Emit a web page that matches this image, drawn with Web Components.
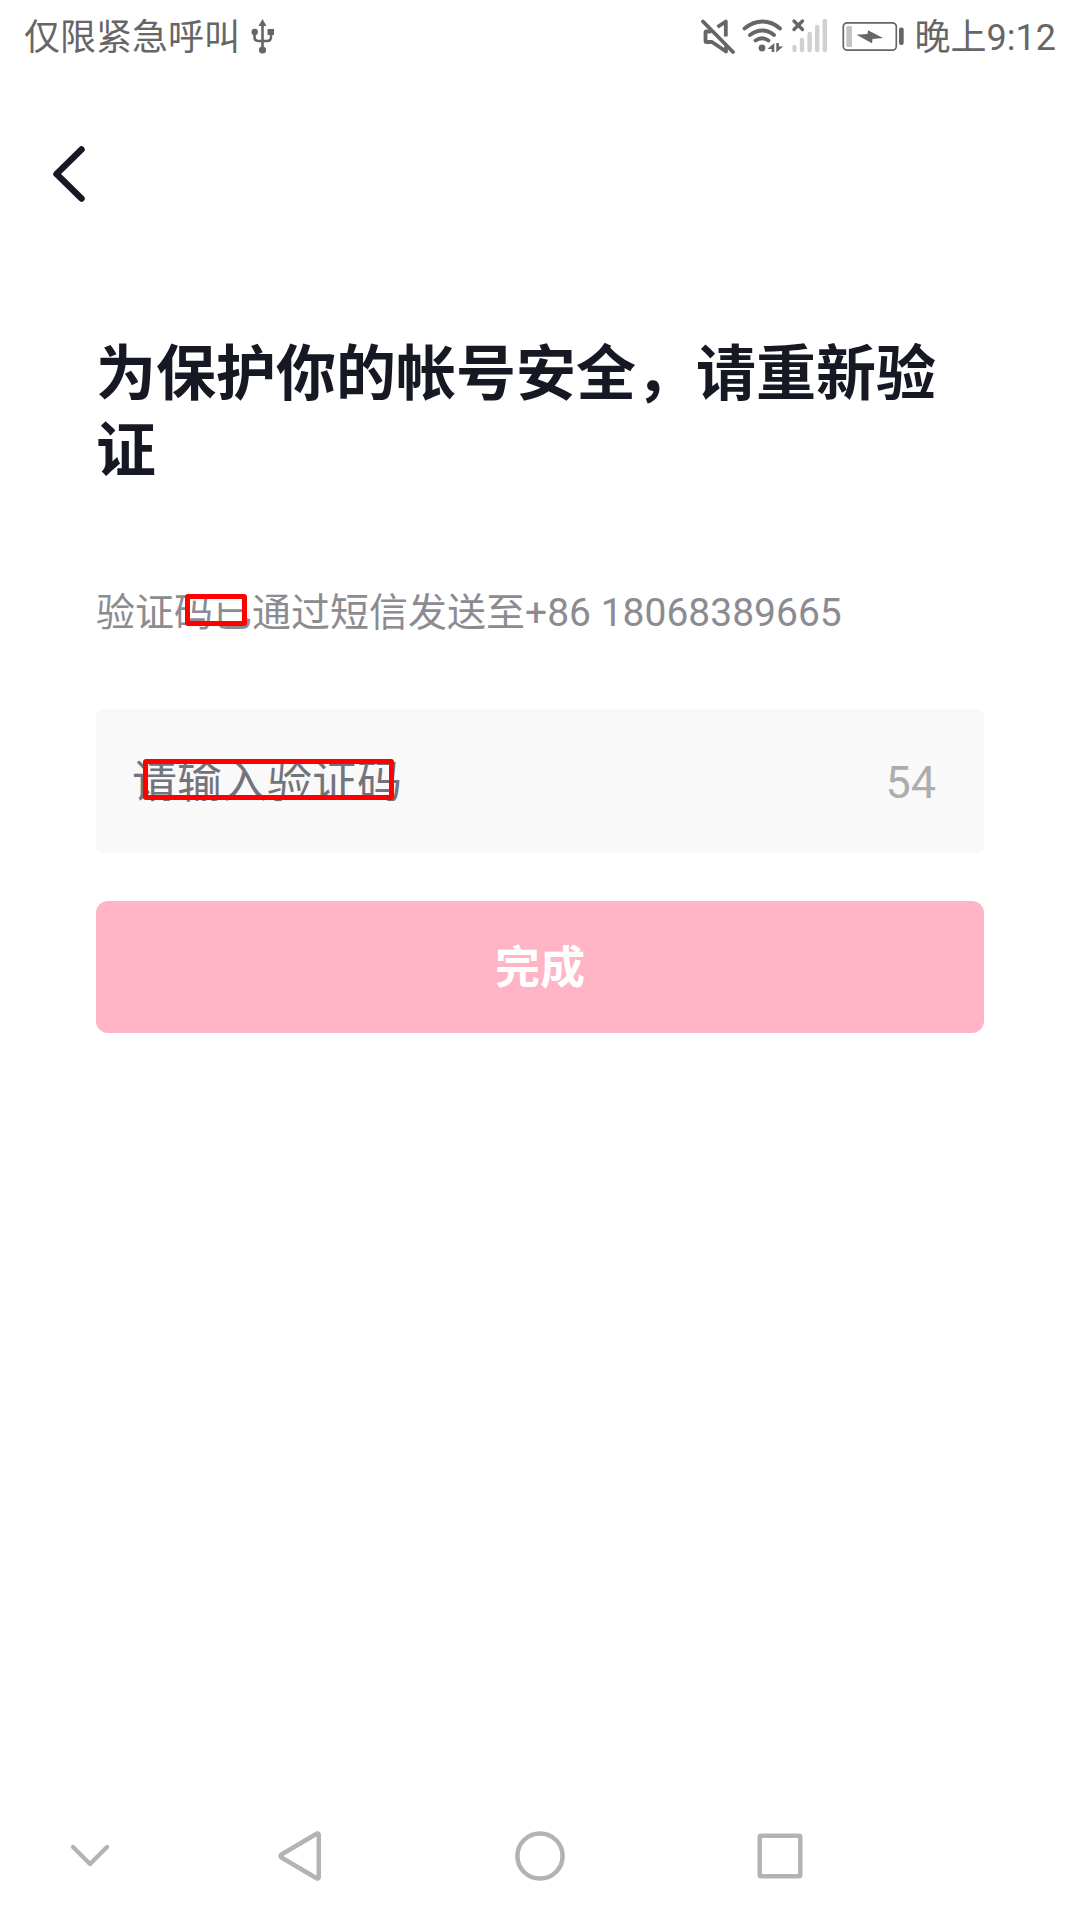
<!DOCTYPE html>
<html lang="zh-CN">
<head>
<meta charset="utf-8">
<meta name="viewport" content="width=device-width, initial-scale=1">
<title>验证</title>
<style>
  body { margin: 0; background: #fff; font-family: Roboto, "Noto Sans CJK SC", sans-serif; }
</style>
</head>
<body>
<verify-page>
  <status-bar slot="status" carrier="仅限紧急呼叫" time="晚上9:12"></status-bar>
  <page-header slot="header"></page-header>
  <page-title>为保护你的帐号安全，请重新验证</page-title>
  <sent-note>验证码已通过短信发送至+86 18068389665</sent-note>
  <code-field placeholder="请输入验证码" seconds="54"></code-field>
  <submit-button>完成</submit-button>
  <system-nav slot="nav"></system-nav>
</verify-page>

<script>
  const define = (name, render) => customElements.define(name, class extends HTMLElement {
    constructor() {
      super();
      this.attachShadow({ mode: 'open' });
    }
    connectedCallback() {
      this.shadowRoot.innerHTML = '<style>*{box-sizing:border-box}svg{display:block}</style>' + render(this);
    }
  });

  define('verify-page', () => `
    <style>
      :host { display: flex; flex-direction: column; min-height: 100vh; }
      main { display: flex; flex-direction: column; padding: 60px 96px 48px; }
      footer { margin-top: auto; }
    </style>
    <slot name="status"></slot>
    <slot name="header"></slot>
    <main><slot></slot></main>
    <footer><slot name="nav"></slot></footer>`);

  define('status-bar', el => `
    <style>
      :host { display: flex; align-items: center; justify-content: space-between; height: 72px; padding: 0 24px; color: #666; font-size: 36px; line-height: 48px; }
      div { display: flex; align-items: center; }
      span { padding-top: 4px; }
      .left, .right { gap: 10px; }
      .icons { gap: 4px; padding-right: 2px; }
    </style>
    <div class="left">
      <span>${el.getAttribute('carrier')}</span>
      <svg width="26" height="40" viewBox="250 16 26 40" fill="#666" aria-hidden="true">
        <path d="M262.500 19l4 7h-8z"/><circle cx="262.500" cy="50" r="3.600"/><circle cx="254.700" cy="32" r="3.200"/><path d="M267.500 29h6.500v6h-6.500z"/>
        <path d="M262.500 25v25M254.500 33v4q0 4 4 4h8.500q4 0 4-4v-4" fill="none" stroke="#666" stroke-width="2.600"/>
      </svg>
    </div>
    <div class="right">
      <div class="icons">
        <svg width="36" height="40" viewBox="702 16 36 40" fill="none" stroke="#666" stroke-width="3.800" stroke-linecap="round" stroke-linejoin="round" aria-hidden="true">
          <path d="M704 21.500L734 52"/><path d="M711 31.500h-3.500q-1 0-1 1v8.500q0 1 1 1h5.500l14 9.500v-4"/><path d="M718.500 27l8.300-5.500v15" stroke-linecap="butt"/>
        </svg>
        <svg width="44" height="40" viewBox="742 16 44 40" fill="none" stroke="#666" stroke-width="3.800" stroke-linecap="round" aria-hidden="true">
          <path d="M745.500 28.500Q754 21.500 763.500 21.500T781 28.500M751 35Q757 30.500 763.300 30.500T775 35M756.500 40.500Q763 36 769.500 40.500"/>
          <circle cx="763" cy="48" r="3.400" fill="#666" stroke="none"/>
          <path d="M775.300 43v9h-2.600v-3h-4.200zM777.300 43h2.600v3.500h4.200l-6.800 6z" fill="#666" stroke="none"/>
        </svg>
        <svg width="40" height="40" viewBox="790 16 40 40" fill="none" stroke-linecap="round" aria-hidden="true">
          <path d="M795.500 47v3M803 40v10M810.600 34v16M818.200 27v23M825.800 21v29" stroke="#d0d0d0" stroke-width="4.400"/>
          <path d="M795 21l8.500 8.500M803.500 21l-8.500 8.500" stroke="#666" stroke-width="3.400"/>
        </svg>
      </div>
      <svg width="64" height="40" viewBox="842 16 64 40" aria-hidden="true">
        <rect x="844.300" y="22.800" width="53" height="27.400" rx="4" fill="none" stroke="#666" stroke-width="1.700"/>
        <rect x="847.300" y="26" width="5.700" height="21" rx="1.500" fill="#c4c4c4"/>
        <rect x="900" y="27.500" width="4.700" height="17.500" rx="2" fill="#666"/>
        <path d="M857.500 34.700l11-.7.500-3.800L884 38l-10.500 1-.5 4.200z" fill="#666"/>
      </svg>
      <span>${el.getAttribute('time')}</span>
    </div>`);

  define('page-header', () => `
    <style>
      :host { display: flex; align-items: center; height: 204px; padding: 0 24px; }
      button { padding: 0; border: 0; background: none; }
    </style>
    <button type="button" aria-label="返回">
      <svg width="90" height="90" viewBox="24 129 90 90" fill="none" stroke="#161823" stroke-width="6.500" stroke-linecap="round" stroke-linejoin="round">
        <path d="M81.500 149.500L56.500 174l25 24.500"/>
      </svg>
    </button>`);

  define('page-title', () => `
    <style>
      :host { display: block; }
      h1 { margin: 0; color: #161823; font-size: 60px; line-height: 77px; font-weight: 700; }
    </style>
    <h1><slot></slot></h1>`);

  define('sent-note', () => `
    <style>
      :host { display: block; position: relative; margin-top: 96px; }
      p { margin: 0; color: #8b8b91; font-size: 39px; line-height: 54px; }
      .mark { position: absolute; left: 89px; top: 8px; width: 62px; height: 32px; border: 5px solid #f00; border-radius: 3px; }
    </style>
    <p><slot></slot></p>
    <span class="mark" aria-hidden="true"></span>`);

  define('code-field', el => `
    <style>
      :host { display: flex; align-items: center; position: relative; box-sizing: border-box; height: 144px; margin-top: 69px; padding: 4px 48px 0 36px; border-radius: 6px; background: #f9f9f9; font-size: 45px; line-height: 60px; }
      input { flex: 1; min-width: 0; height: 60px; padding: 0; border: 0; outline: 0; background: none; font: inherit; color: #161823; }
      input::placeholder { color: #73747b; opacity: 1; }
      output { color: #adadb0; }
      .mark { position: absolute; left: 47px; top: 50px; width: 251px; height: 41px; border: 5px solid #f00; border-radius: 3px; }
    </style>
    <input id="code" type="text" inputmode="numeric" aria-label="${el.getAttribute('placeholder')}" placeholder="${el.getAttribute('placeholder')}">
    <output for="code">${el.getAttribute('seconds')}</output>
    <span class="mark" aria-hidden="true"></span>`);

  define('submit-button', () => `
    <style>
      :host { display: flex; margin-top: 48px; }
      button { flex: 1; height: 132px; padding: 4px 0 0; border: 0; border-radius: 12px; background: #ffb5c5; color: #fff; font: inherit; font-size: 45px; line-height: 60px; font-weight: 700; }
    </style>
    <button type="button"><slot></slot></button>`);

  define('system-nav', () => `
    <style>
      :host { display: block; }
      nav { display: grid; grid-template-columns: 3fr 4fr 4fr 4fr 3fr; align-items: center; justify-items: center; height: 128px; }
      button { padding: 0; border: 0; background: none; }
      svg { fill: none; stroke: #b3b3b3; stroke-width: 4.500; stroke-linecap: round; stroke-linejoin: round; }
    </style>
    <nav>
      <button type="button" aria-label="收起"><svg width="60" height="60" viewBox="-30 -30 60 60"><path d="M-17-9L0 8 17-9" stroke-width="4.300"/></svg></button>
      <button type="button" aria-label="返回"><svg width="60" height="60" viewBox="-30 -30 60 60"><path d="M-18.500-1.500L17-22.500q1.800-.5 1.800 1.500V21q0 2-1.800 1.500L-18.500 1.500q-1.800-1.500 0-3z"/></svg></button>
      <button type="button" aria-label="主屏幕"><svg width="60" height="60" viewBox="-30 -30 60 60"><circle r="22.600"/></svg></button>
      <button type="button" aria-label="最近任务"><svg width="60" height="60" viewBox="-30 -30 60 60"><rect x="-20.300" y="-20.300" width="40.600" height="40.600" rx="1.500"/></svg></button>
    </nav>`);
</script>
</body>
</html>
